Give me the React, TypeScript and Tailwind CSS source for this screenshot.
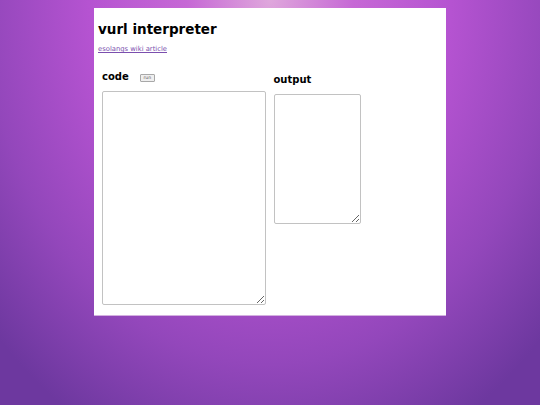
import { useState } from 'react'

export default function App() {
  const [code, setCode] = useState('')
  const [output, setOutput] = useState('')

  return (
    <div
      className="min-h-screen w-full pt-[8px] bg-[radial-gradient(ellipse_70%_120%_at_50%_0%,#dfa7dc_0%,#c668d5_22%,#b553d1_48%,#9347bb_75%,#6d389f_100%)]"
      style={{ fontFamily: '"DejaVu Sans", "Liberation Sans", sans-serif' }}
    >
      {/* Page panel */}
      <div className="mx-auto w-[352px] h-[307px] bg-white pt-[13px] pl-[4px] shadow-[0_1px_0_#d3b0e0]">
        <h1 className="text-[13.5px] leading-[16px] font-bold text-black">vurl interpreter</h1>
        <a
          href="#"
          className="block mt-[8px] w-max text-[6.8px] leading-[8px] text-[#7b4fae] underline"
        >
          esolangs wiki article
        </a>

        <div className="flex items-start gap-[8px] mt-[17.5px] ml-[4px]">
          {/* Code column */}
          <div className="flex flex-col">
            <div className="flex items-center h-[12px]">
              <h2 className="text-[10px] leading-[12px] font-bold text-black">code</h2>
              <button
                onClick={() => setOutput(code)}
                className="ml-[11px] mt-[3px] w-[15px] h-[8.5px] flex items-center justify-center bg-[#efefef] border border-[#a8a8a8] rounded-[1px] text-[4.5px] leading-none text-[#555]"
              >
                run
              </button>
            </div>
            <textarea
              value={code}
              onChange={(e) => setCode(e.target.value)}
              className="mt-[8.5px] w-[163.5px] h-[213.5px] border border-[#c2c2c2] rounded-[2px] bg-white outline-none"
            />
          </div>

          {/* Output column */}
          <div className="flex flex-col mt-[3px]">
            <h2 className="text-[10px] leading-[12px] font-bold text-black">output</h2>
            <textarea
              value={output}
              readOnly
              className="mt-[8.5px] w-[87px] h-[130px] border border-[#c2c2c2] rounded-[2px] bg-white outline-none"
            />
          </div>
        </div>
      </div>
    </div>
  )
}
